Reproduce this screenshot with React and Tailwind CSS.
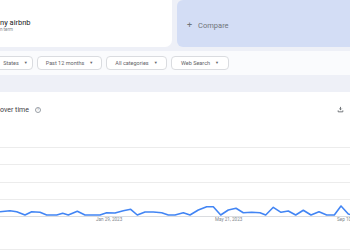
import React from 'react';

const points = [
  [0, 211.7], [10, 210.7], [16.7, 211.7], [25, 215], [31.7, 211.7], [40, 212.3], [46.7, 215],
  [56.7, 215], [62.7, 213.3], [68.3, 215], [77.3, 211.3], [85, 215], [100, 215], [106.7, 212.7],
  [115, 213], [123.3, 210.7], [130.7, 209.3], [137.3, 215], [145, 212], [153.3, 212], [161.7, 212.7],
  [168.3, 215], [175, 215], [183.3, 212.7], [190, 215], [198.3, 210], [206.7, 206.7], [213.3, 206.7],
  [220.7, 215], [228.3, 210], [236, 208.3], [243.3, 212.7], [251.7, 212.3], [260, 212.7], [265.7, 215],
  [273.3, 207.3], [281, 212.3], [288.3, 211], [295.7, 215], [303.3, 210.3], [311, 215], [319, 211.7],
  [326.7, 215], [334.3, 215], [341, 206], [348.3, 214], [352, 215],
];

const CHART_TOP = 140;

const Chip = ({ label, className = '' }) => (
  <div className={`h-[14px] flex items-center justify-center gap-[5px] bg-white border border-[#dadce0] rounded-[4px] text-[5.5px] text-[#5f6368] ${className}`}>
    <span>{label}</span>
    <span className="text-[4px] text-[#5f6368]">▼</span>
  </div>
);

const TrendChart = () => {
  const path = points.map(([x, y], i) => `${i ? 'L' : 'M'}${x} ${(y - CHART_TOP).toFixed(1)}`).join(' ');
  const grid = [7, 24, 42, 59, 76, 109];
  return (
    <svg width="350" height="110" className="block">
      {grid.map(y => (
        <line key={y} x1="0" x2="350" y1={y + 0.5} y2={y + 0.5} stroke={y === 76 ? '#dadce0' : '#ececec'} strokeWidth="1" />
      ))}
      <path d={path} fill="none" stroke="#4285f4" strokeWidth="1.6" strokeLinejoin="round" />
      <g fontFamily="Roboto, sans-serif" fontSize="4.6" fill="#80868b">
        <text x="96" y="81">Jan 29, 2023</text>
        <text x="215" y="81">May 21, 2023</text>
        <text x="337" y="81">Sep 10</text>
      </g>
    </svg>
  );
};

export default function App() {
  return (
    <div className="w-[350px] h-[250px] overflow-hidden bg-[#eef0f7] font-['Roboto',sans-serif]">
      {/* Search terms */}
      <div className="flex h-[47px] gap-[5px]">
        <div className="w-[172px] bg-white rounded-br-[7px] flex flex-col justify-center pt-[4px]">
          <div className="text-[7.5px] leading-[9px] text-[#202124]">ny airbnb</div>
          <div className="text-[4.5px] leading-[6px] text-[#80868b]">n term</div>
        </div>
        <div className="flex-1 bg-[#d3ddf5] rounded-l-[6px] flex items-center pl-[10px] pt-[4px] gap-[6px] text-[#70757a]">
          <span className="text-[9px] leading-none">+</span>
          <span className="text-[7.5px]">Compare</span>
        </div>
      </div>

      {/* Filters */}
      <div className="mt-[4px] h-[24px] bg-[#fafbfd] flex items-start pt-[5px] gap-[4px]">
        <Chip label="States" className="w-[37px] ml-[-4px] pl-[2px]" />
        <Chip label="Past 12 months" className="w-[65px]" />
        <Chip label="All categories" className="w-[61px]" />
        <Chip label="Web Search" className="w-[58px]" />
      </div>

      {/* Interest over time */}
      <div className="mt-[17px] bg-white h-[158px]">
        <div className="h-[48px] flex items-start justify-between pt-[13px] pr-[6px]">
          <div className="flex items-center gap-[6px]">
            <span className="text-[7px] text-[#3c4043]">over time</span>
            <span className="w-[6px] h-[6px] rounded-full border border-[#9aa0a6] text-[4px] leading-none flex items-center justify-center text-[#9aa0a6]">?</span>
          </div>
          <svg width="7" height="7" viewBox="0 0 24 24" className="mt-[1px]">
            <path d="M12 3v10m-4-4 4 4 4-4M4 15v5h16v-5" fill="none" stroke="#5f6368" strokeWidth="3" />
          </svg>
        </div>
        <TrendChart />
      </div>
    </div>
  );
}
